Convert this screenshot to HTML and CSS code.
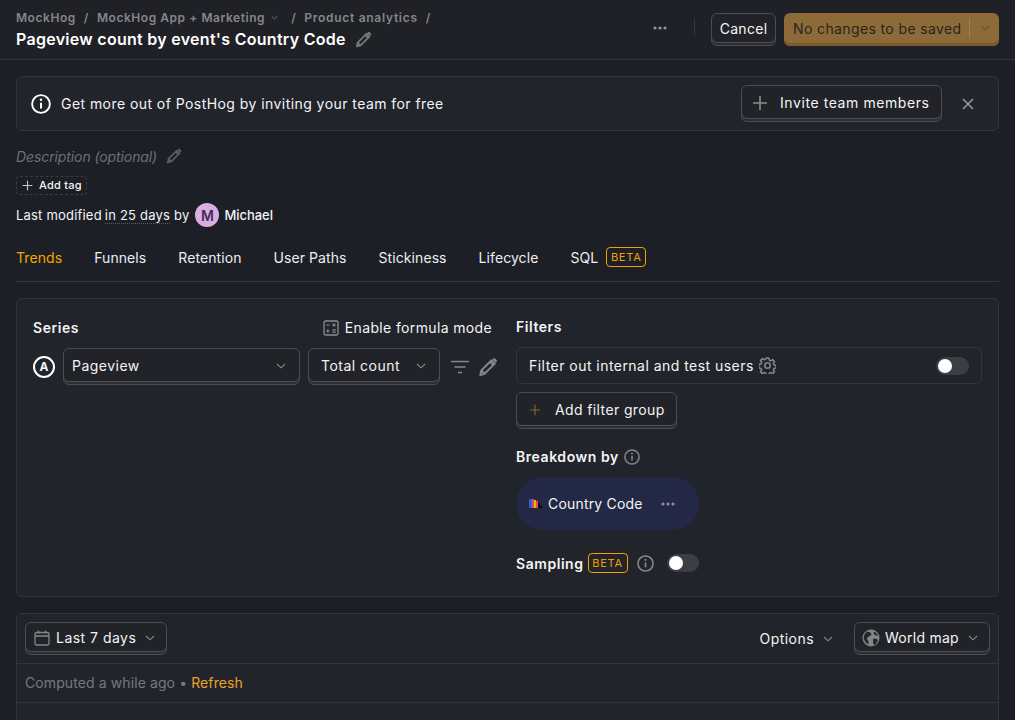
FILE: index.html
```html
<!DOCTYPE html>
<html lang="en">

<head>
    <meta charset="UTF-8" />
    <meta name="viewport" content="width=device-width, initial-scale=1.0" />
    <title>Pageview count by event's Country Code</title>
    <link rel="stylesheet" href="styles.css">
</head>

<body>
    <svg class="sprite" width="0" height="0">
        <symbol id="pencil" viewBox="0 0 20 20">
            <path d="M3 17.2l.9-4L13.2 3.9l3 3L6.9 16.2z M11.8 5.3l3 3 M3.9 13.2l3 3" fill="none" stroke="currentColor" stroke-width="1.8" stroke-linejoin="round" />
            <path d="M14 3.1l.9-.9a1 1 0 0 1 1.4 0l1.6 1.6a1 1 0 0 1 0 1.4l-.9.9z" fill="currentColor" />
        </symbol>
        <symbol id="chevron" viewBox="0 0 12 12">
            <path d="M2 4l4 3.8L10 4" fill="none" stroke="currentColor" stroke-width="1.1" />
        </symbol>
        <symbol id="plus" viewBox="0 0 16 16">
            <path d="M8 1v14M1 8h14" fill="none" stroke="currentColor" stroke-width="1.6" />
        </symbol>
        <symbol id="dots" viewBox="0 0 14 4">
            <circle cx="2" cy="2" r="1.6" fill="currentColor" />
            <circle cx="7" cy="2" r="1.6" fill="currentColor" />
            <circle cx="12" cy="2" r="1.6" fill="currentColor" />
        </symbol>
        <symbol id="info" viewBox="0 0 16 16">
            <circle cx="8" cy="8" r="7.1" fill="none" stroke="currentColor" stroke-width="1.5" />
            <path d="M8 7v4.6" stroke="currentColor" stroke-width="1.6" />
            <circle cx="8" cy="4.6" r="1" fill="currentColor" />
        </symbol>
    </svg>

    <header class="topbar">
        <div class="topbar-left">
            <nav class="crumbs">
                <span>MockHog</span><span class="sep">/</span>
                <span>MockHog App + Marketing</span>
                <svg class="crumb-chevron"><use href="#chevron" /></svg>
                <span class="sep sep-wide">/</span>
                <span class="crumb-last">Product analytics</span><span class="sep">/</span>
            </nav>
            <h1 class="title">Pageview count by event's Country Code
                <svg class="title-pencil"><use href="#pencil" /></svg>
            </h1>
        </div>
        <div class="topbar-right">
            <svg class="more"><use href="#dots" /></svg>
            <span class="divider"></span>
            <button class="btn btn-cancel">Cancel</button>
            <div class="btn-save">
                <span class="save-label">No changes to be saved</span>
                <span class="save-caret"><svg class="chev"><use href="#chevron" /></svg></span>
            </div>
        </div>
    </header>

    <main class="page">
        <section class="banner">
            <svg class="banner-info"><use href="#info" /></svg>
            <span class="banner-text">Get more out of PostHog by inviting your team for free</span>
            <button class="btn btn-invite"><svg class="icon-plus"><use href="#plus" /></svg>Invite team members</button>
            <svg class="banner-close" viewBox="0 0 12 12"><path d="M1 1l10 10M11 1L1 11" fill="none" stroke="currentColor" stroke-width="1.5" /></svg>
        </section>

        <div class="description">Description (optional)
            <svg class="desc-pencil"><use href="#pencil" /></svg>
        </div>
        <div class="tag-row">
            <span class="add-tag"><svg class="tag-plus"><use href="#plus" /></svg>Add tag</span>
        </div>
        <div class="modified">
            <span>Last modified</span>
            <span class="dotted">in 25 days</span>
            <span>by</span>
            <span class="avatar">M</span>
            <span class="author">Michael</span>
        </div>

        <nav class="tabs">
            <a class="tab active">Trends</a>
            <a class="tab">Funnels</a>
            <a class="tab">Retention</a>
            <a class="tab">User Paths</a>
            <a class="tab">Stickiness</a>
            <a class="tab">Lifecycle</a>
            <a class="tab">SQL <span class="beta">BETA</span></a>
        </nav>

        <section class="panel">
            <div class="series">
                <div class="series-head">
                    <h3>Series</h3>
                    <span class="formula">
                        <svg class="formula-icon" viewBox="0 0 16 16">
                            <rect x="1" y="1" width="14" height="14" rx="1.5" fill="none" stroke="currentColor" stroke-width="1.3" />
                            <path d="M3.2 5h3.4M3.2 11h3.4M4.9 9.3v3.4M9.6 3.6l2.8 2.8M12.4 3.6L9.6 6.4M9.4 9.9h3.4M9.4 12.1h3.4" fill="none" stroke="currentColor" stroke-width="1.1" />
                        </svg>
                        Enable formula mode
                    </span>
                </div>
                <div class="series-row">
                    <span class="letter">A</span>
                    <div class="btn select select-event">Pageview<svg class="chev"><use href="#chevron" /></svg></div>
                    <div class="btn select select-math">Total count<svg class="chev"><use href="#chevron" /></svg></div>
                    <svg class="filter-icon" viewBox="0 0 18 14"><path d="M0 1.5h18M3.5 7h11M7 12.5h4" fill="none" stroke="currentColor" stroke-width="1.6" /></svg>
                    <svg class="row-pencil"><use href="#pencil" /></svg>
                </div>
            </div>

            <div class="filters">
                <h3>Filters</h3>
                <div class="test-users">
                    <span>Filter out internal and test users</span>
                    <svg class="gear" viewBox="0 0 16 16">
                        <path d="M6.7 1h2.6l.4 2 1.3.6 1.8-1.1 1.8 1.9-1.1 1.7.6 1.4 2 .4v2.4l-2 .5-.6 1.3 1.1 1.8-1.8 1.8-1.8-1.1-1.3.6-.4 2H6.7l-.4-2-1.3-.6-1.8 1.1-1.8-1.8 1.1-1.8-.6-1.3-2-.5V6.9l2-.4.6-1.4-1.1-1.7 1.8-1.9 1.8 1.1 1.3-.6z" fill="none" stroke="currentColor" stroke-width="1.5" stroke-linejoin="round" />
                        <circle cx="8" cy="8" r="2.6" fill="none" stroke="currentColor" stroke-width="1.5" />
                    </svg>
                    <span class="toggle"><span class="knob"></span></span>
                </div>
                <button class="btn btn-filter"><svg class="icon-plus-amber"><use href="#plus" /></svg>Add filter group</button>

                <h3 class="breakdown-head">Breakdown by <svg class="info-small"><use href="#info" /></svg></h3>
                <div class="pill">
                    <svg class="prop-icon" viewBox="0 0 14 9">
                        <rect x="0" y="0" width="3" height="9" fill="#2f5be0" />
                        <rect x="3" y="0" width="2" height="9" fill="#e0503a" />
                        <rect x="5" y="1" width="2" height="8" fill="#f6a623" />
                        <rect x="7" y="2" width="2" height="7" fill="#e0503a" />
                        <path d="M9 3l5 6H9z" fill="#0a0a0a" />
                    </svg>
                    <span>Country Code</span>
                    <svg class="pill-dots"><use href="#dots" /></svg>
                </div>

                <div class="sampling">
                    <h3>Sampling</h3>
                    <span class="beta">BETA</span>
                    <svg class="info-small"><use href="#info" /></svg>
                    <span class="toggle toggle-sampling"><span class="knob"></span></span>
                </div>
            </div>
        </section>

        <section class="results">
            <div class="results-bar">
                <div class="btn btn-date">
                    <svg class="calendar" viewBox="0 0 16 16">
                        <rect x="1" y="2.5" width="14" height="12.5" rx="1.5" fill="none" stroke="currentColor" stroke-width="1.3" />
                        <path d="M1 6h14M4.5 .5v3M11.5 .5v3" fill="none" stroke="currentColor" stroke-width="1.3" />
                    </svg>
                    Last 7 days<svg class="chev"><use href="#chevron" /></svg>
                </div>
                <div class="results-actions">
                    <span class="options">Options<svg class="chev"><use href="#chevron" /></svg></span>
                    <div class="btn btn-map">
                        <svg class="globe" viewBox="0 0 18 18">
                            <circle cx="9" cy="9" r="8.5" fill="currentColor" />
                            <path d="M5 2.6l3 .6 1.6 1.8-1.4 2L5.6 8 5 10.4l1.6 2-.4 3L3.4 13 1.6 9.6 2.4 5.4zM11.4 9.6l3.6.4.8 1.6-2 3.4-2 1.2-.8-3z M12 2.4l2.6 1.8 1.4 2.6-2.6-.6-1.8-1.6z" fill="#23252c" />
                        </svg>
                        World map<svg class="chev"><use href="#chevron" /></svg>
                    </div>
                </div>
            </div>
            <div class="computed">Computed a while ago <span class="bullet">•</span> <a class="refresh">Refresh</a></div>
            <div class="results-body"></div>
        </section>
    </main>
</body>

</html>
```

FILE: styles.css
```css
body,
html {
    margin: 0;
    padding: 0;
    height: 720px;
    overflow: hidden;
    background: #1d1f27;
    color: #f4f4f5;
    font-family: 'Inter', 'Noto Sans', sans-serif;
    font-size: 14px;
}

.sprite {
    position: absolute;
}

h1,
h3 {
    margin: 0;
}

h3 {
    font-size: 14px;
    font-weight: 600;
    letter-spacing: 0.55px;
}

button {
    font-family: inherit;
}

.chev {
    width: 12px;
    height: 12px;
    color: #85868a;
    flex: none;
}

/* top bar */
.topbar {
    display: flex;
    justify-content: space-between;
    align-items: flex-start;
    height: 59px;
    padding: 0 16px;
    background: #1f2127;
    border-bottom: 1px solid #35373d;
}

.topbar-left {
    padding-top: 9px;
}

.crumbs {
    display: flex;
    align-items: center;
    height: 16px;
    font-size: 12px;
    font-weight: 600;
    letter-spacing: 0.55px;
    color: #85868a;
}

.crumb-last {
    letter-spacing: 0.72px;
}

.sep {
    margin: 0 8px;
}

.sep-wide {
    margin-left: 12px;
}

.crumb-chevron {
    width: 9px;
    height: 9px;
    margin-left: 5px;
}

.title {
    display: flex;
    align-items: center;
    height: 22px;
    margin-top: 3px;
    font-size: 16px;
    font-weight: 600;
    letter-spacing: 0.28px;
    color: #fff;
}

.title-pencil {
    width: 19px;
    height: 19px;
    margin-left: 8px;
    color: #77787c;
}

.topbar-right {
    display: flex;
    align-items: center;
    padding-top: 13px;
}

.more {
    width: 14px;
    height: 4px;
    margin-right: 27px;
    margin-top: -4px;
    color: #94959a;
}

.divider {
    width: 1px;
    height: 17px;
    margin-right: 16px;
    margin-top: -4px;
    background: #35373d;
}

/* buttons have a raised lip along the bottom */
.btn {
    display: flex;
    align-items: center;
    box-sizing: border-box;
    background: #212329;
    border: 1px solid #4c4d53;
    border-radius: 6px;
    box-shadow: inset 0 -2px 0 #2c2d32, inset 0 -3px 0 #505156;
    color: #f4f4f5;
    font-size: 14px;
    font-weight: 400;
    letter-spacing: 0.48px;
    padding: 0 0 2px;
}

.btn-cancel {
    justify-content: center;
    width: 65px;
    height: 33px;
    margin-right: 8px;
    letter-spacing: 0.3px;
}

.btn-save {
    display: flex;
    width: 215px;
    height: 33px;
    box-sizing: border-box;
    background: #8d6b38;
    border-radius: 6px;
    box-shadow: inset 0 -3px 0 #7a5b2e;
    color: #28241e;
    font-weight: 400;
    letter-spacing: 0.38px;
    padding-bottom: 3px;
}

.save-label {
    flex: 1;
    padding-left: 9px;
    line-height: 31px;
}

.save-caret {
    display: flex;
    align-items: center;
    justify-content: center;
    width: 29px;
    height: 20px;
    margin-top: 5px;
    border-left: 1px solid #a07f4c;
}

.save-caret .chev {
    color: #66522f;
}

/* main */
.page {
    padding: 16px;
}

.banner {
    display: flex;
    align-items: center;
    box-sizing: border-box;
    height: 55px;
    padding: 0 24px 0 14px;
    background: #22242b;
    border: 1px solid #33353b;
    border-radius: 6px;
}

.banner-info {
    width: 20px;
    height: 20px;
    margin-right: 10px;
    color: #fff;
}

.banner-text {
    flex: 1;
    font-weight: 400;
    letter-spacing: 0.44px;
}

.btn-invite {
    width: 201px;
    height: 37px;
    padding-left: 10px;
    letter-spacing: 0.58px;
}

.icon-plus {
    width: 16px;
    height: 16px;
    margin-right: 12px;
    color: #8b8c90;
}

.banner-close {
    width: 12px;
    height: 12px;
    margin-left: 20px;
    color: #9a9b9f;
}

.description {
    display: flex;
    align-items: center;
    height: 20px;
    margin-top: 15px;
    font-style: italic;
    letter-spacing: -0.1px;
    color: #6f7075;
}

.desc-pencil {
    width: 18px;
    height: 18px;
    margin-left: 8px;
    color: #5e5f63;
}

.tag-row {
    display: flex;
    margin-top: 10px;
}

.add-tag {
    display: flex;
    align-items: center;
    box-sizing: border-box;
    width: 71px;
    height: 19px;
    padding: 0 0 1px 5px;
    border: 1px dashed #3a3c42;
    border-radius: 4px;
    font-size: 11px;
    font-weight: 500;
    letter-spacing: 0.25px;
}

.tag-plus {
    width: 11px;
    height: 11px;
    margin-right: 6px;
    color: #c8c8ca;
}

.modified {
    display: flex;
    align-items: center;
    gap: 3px;
    height: 24px;
    margin-top: 8px;
    font-size: 13px;
    letter-spacing: 0.2px;
}

.dotted {
    border-bottom: 1px dotted #5a5b60;
    margin-right: 1px;
}

.avatar {
    display: flex;
    align-items: center;
    justify-content: center;
    width: 24px;
    height: 24px;
    margin: 0 2px 0 3px;
    border-radius: 50%;
    background: #d9aee0;
    color: #4a2a55;
    font-size: 14px;
    font-weight: 600;
}

.author {
    font-weight: 500;
    letter-spacing: -0.05px;
}

.tabs {
    display: flex;
    gap: 32px;
    height: 44px;
    margin-top: 10px;
    border-bottom: 1px solid #35373d;
}

.tab {
    display: flex;
    align-items: center;
    height: 40px;
    color: #eeeeef;
    letter-spacing: 0.08px;
}

.tab.active {
    color: #f7a501;
}

.beta {
    display: inline-flex;
    align-items: center;
    justify-content: center;
    box-sizing: border-box;
    width: 40px;
    height: 20px;
    margin-left: 8px;
    border: 1px solid #f0a000;
    border-radius: 4px;
    color: #f0a000;
    font-size: 11px;
    font-weight: 400;
    letter-spacing: 0.8px;
}

/* series + filters */
.panel {
    display: grid;
    grid-template-columns: 467px 1fr;
    gap: 16px;
    box-sizing: border-box;
    height: 299px;
    margin-top: 16px;
    padding: 16px;
    background: #22242b;
    border: 1px solid #33353b;
    border-radius: 6px;
}

.series-head {
    display: flex;
    justify-content: space-between;
    align-items: center;
    height: 25px;
    padding-right: 8px;
}

.formula {
    display: flex;
    align-items: center;
    font-weight: 400;
    letter-spacing: 0.36px;
}

.formula-icon {
    width: 16px;
    height: 16px;
    margin-right: 6px;
    color: #8b8c90;
}

.series-row {
    display: flex;
    align-items: center;
    margin-top: 8px;
}

.letter {
    display: flex;
    align-items: center;
    justify-content: center;
    box-sizing: border-box;
    width: 22px;
    height: 22px;
    margin-right: 8px;
    border: 2px solid #fff;
    border-radius: 50%;
    font-size: 12px;
    font-weight: 700;
}

.select {
    justify-content: space-between;
    height: 37px;
}

.select-event {
    width: 237px;
    padding-left: 8px;
    padding-right: 12px;
    margin-right: 8px;
}

.select-math {
    width: 132px;
    padding-left: 12px;
    padding-right: 12px;
}

.filter-icon {
    width: 18px;
    height: 14px;
    margin-left: 11px;
    color: #85868a;
}

.row-pencil {
    width: 22px;
    height: 22px;
    margin-left: 8px;
    color: #85868a;
}

.filters {
    display: flex;
    flex-direction: column;
    align-items: flex-start;
    padding-top: 3px;
}

.filters h3 {
    line-height: 17px;
}

.test-users {
    display: flex;
    align-items: center;
    box-sizing: border-box;
    width: 100%;
    height: 37px;
    margin-top: 12px;
    padding: 0 12px;
    border: 1px solid #33353b;
    border-radius: 6px;
    font-weight: 400;
    letter-spacing: 0.46px;
}

.gear {
    width: 17px;
    height: 17px;
    margin-left: 5px;
    margin-right: auto;
    color: #85868a;
}

.toggle {
    display: flex;
    align-items: center;
    width: 33px;
    height: 18px;
    padding-left: 2px;
    box-sizing: border-box;
    border-radius: 9px;
    background: #3d3e43;
}

.knob {
    width: 14px;
    height: 14px;
    border-radius: 50%;
    background: #fff;
}

.btn-filter {
    width: 161px;
    height: 37px;
    margin-top: 8px;
    padding-left: 12px;
    letter-spacing: 0.38px;
}

.icon-plus-amber {
    width: 12px;
    height: 12px;
    margin-right: 14px;
    color: #86642a;
}

.breakdown-head {
    display: flex;
    align-items: center;
    margin-top: 19px;
}

.info-small {
    width: 16px;
    height: 16px;
    margin-left: 5px;
    color: #85868a;
}

.pill {
    display: flex;
    align-items: center;
    box-sizing: border-box;
    width: 183px;
    height: 53px;
    margin-top: 12px;
    padding-left: 13px;
    border-radius: 27px;
    background: #222845;
    letter-spacing: 0.18px;
}

.prop-icon {
    width: 14px;
    height: 9px;
    margin-right: 5px;
}

.pill-dots {
    width: 14px;
    height: 4px;
    margin-left: 18px;
    color: #8d8f9c;
}

.sampling {
    display: flex;
    align-items: center;
    margin-top: 23px;
}

.sampling .beta {
    margin-left: 4px;
}

.sampling .info-small {
    margin-left: 9px;
    width: 17px;
    height: 17px;
}

.toggle-sampling {
    margin-left: 13px;
    width: 32px;
}

/* results */
.results {
    margin-top: 16px;
    background: #22242b;
    border: 1px solid #33353b;
    border-radius: 6px 6px 0 0;
}

.results-bar {
    display: flex;
    justify-content: space-between;
    align-items: center;
    height: 49px;
    padding: 0 8px;
    border-bottom: 1px solid #33353b;
}

.btn-date {
    width: 142px;
    height: 33px;
    padding-left: 8px;
}

.calendar {
    width: 16px;
    height: 16px;
    margin-right: 6px;
    color: #85868a;
}

.btn-date .chev {
    margin-left: 8px;
}

.results-actions {
    display: flex;
    align-items: center;
}

.options {
    display: flex;
    align-items: center;
    margin-right: 20px;
    font-weight: 400;
    letter-spacing: 0.44px;
}

.options .chev {
    margin-left: 8px;
}

.btn-map {
    width: 136px;
    height: 33px;
    padding-left: 7px;
    letter-spacing: 0.26px;
}

.globe {
    width: 18px;
    height: 18px;
    margin-right: 5px;
    color: #85868a;
}

.btn-map .chev {
    margin-left: auto;
    margin-right: 10px;
}

.computed {
    height: 38px;
    padding: 0 8px;
    line-height: 37px;
    border-bottom: 1px solid #33353b;
    color: #77787c;
    letter-spacing: 0.1px;
}

.refresh {
    color: #eda12b;
}

.results-body {
    height: 40px;
}
```
